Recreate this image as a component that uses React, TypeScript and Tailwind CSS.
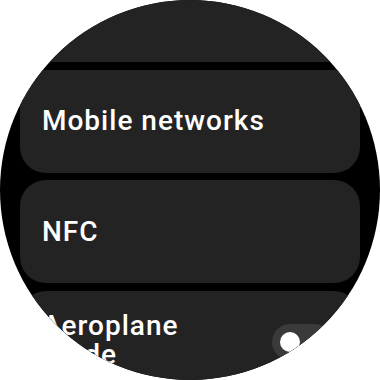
import React from 'react';

const Card: React.FC<{ children?: React.ReactNode; className?: string }> = ({ children, className = '' }) => (
  <div className={`h-[103px] shrink-0 rounded-[26px] bg-[#232323] flex items-center px-[22px] ${className}`}>
    {children}
  </div>
);

export default function App() {
  return (
    <div className="w-[380px] h-[380px] bg-white" style={{ fontFamily: 'Roboto, "Noto Sans", sans-serif' }}>
      <div className="relative w-[380px] h-[380px] rounded-full bg-black overflow-hidden">
        {/* list scrolled so the previous item is mostly off the top */}
        <div className="flex flex-col gap-[7.5px] px-5 -mt-[41px]">
          <Card />
          <Card>
            <span className="text-[28px] tracking-[1px] font-medium text-white">Mobile networks</span>
          </Card>
          <Card>
            <span className="text-[28px] tracking-[1px] font-medium text-white">NFC</span>
          </Card>
          <Card className="justify-between">
            <div className="flex flex-col text-[28px] tracking-[1px] leading-[29px] font-medium text-white -mt-1">
              <span>Aeroplane</span>
              <span>mode</span>
            </div>
            <div className="w-[60px] h-[36px] rounded-full bg-[#3a3a3a] flex items-center px-2 mr-[6px]">
              <div className="w-5 h-5 rounded-full bg-white" />
            </div>
          </Card>
        </div>
      </div>
    </div>
  );
}
